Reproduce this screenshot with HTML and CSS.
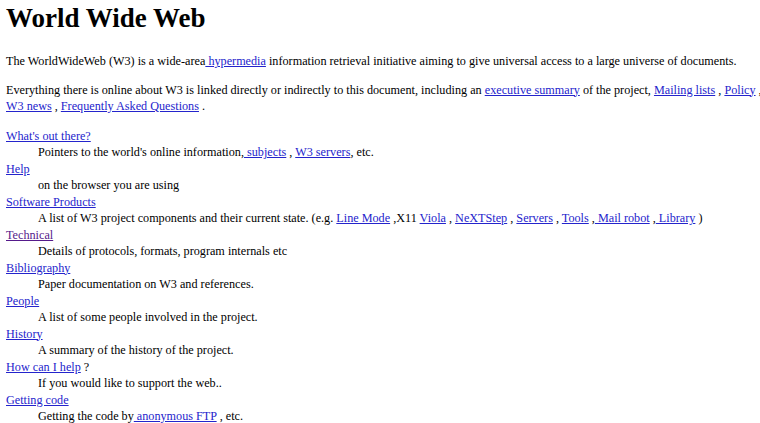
FILE: index.html
```html
<!DOCTYPE html>
<html>
<head>
<meta charset="utf-8">
<title>The World Wide Web project</title>
<link rel="stylesheet" href="styles.css">
</head>
<body>
<div class="page">
<h1 class="title">World Wide Web</h1>
<p class="para">The WorldWideWeb (W3) is a wide-area<a href="#"> hypermedia</a> information retrieval initiative aiming to give universal access to a large universe of documents.</p>
<p class="para">Everything there is online about W3 is linked directly or indirectly to this document, including an <a href="#">executive summary</a> of the project, <a href="#">Mailing lists</a> , <a href="#">Policy</a> , November's <a href="#" class="nowrap">W3 news</a> , <a href="#">Frequently Asked Questions</a> .</p>
<dl class="list">
<dt><a href="#">What's out there?</a></dt>
<dd>Pointers to the world's online information,<a href="#"> subjects</a> , <a href="#">W3 servers</a>, etc.</dd>
<dt><a href="#">Help</a></dt>
<dd>on the browser you are using</dd>
<dt><a href="#">Software Products</a></dt>
<dd>A list of W3 project components and their current state. (e.g. <a href="#">Line Mode</a> ,X11 <a href="#">Viola</a> , <a href="#">NeXTStep</a> , <a href="#">Servers</a> , <a href="#">Tools</a> ,<a href="#"> Mail robot</a> ,<a href="#"> Library</a> )</dd>
<dt><a href="#" class="visited">Technical</a></dt>
<dd>Details of protocols, formats, program internals etc</dd>
<dt><a href="#">Bibliography</a></dt>
<dd>Paper documentation on W3 and references.</dd>
<dt><a href="#">People</a></dt>
<dd>A list of some people involved in the project.</dd>
<dt><a href="#">History</a></dt>
<dd>A summary of the history of the project.</dd>
<dt><a href="#">How can I help</a> ?</dt>
<dd>If you would like to support the web..</dd>
<dt><a href="#">Getting code</a></dt>
<dd>Getting the code by<a href="#"> anonymous FTP</a> , etc.</dd>
</dl>
</div>
</body>
</html>
```
FILE: styles.css
```css
html {
  overflow: hidden;
  background: #ffffff;
}
body {
  margin: 0;
  background: #ffffff;
  color: #000000;
  font-family: "Liberation Serif", "Times New Roman", serif;
  font-size: 12.2px;
  line-height: 16.5px;
}
.page {
  width: 822px;
  padding: 0 6px;
}
.title {
  font-size: 27px;
  line-height: 32px;
  font-weight: bold;
  margin: 2px 0 19px 0;
}
.para {
  margin: 0 0 12px 0;
}
.list {
  margin: 13px 0 0 0;
}
.list dt {
  margin: 0;
}
.list dd {
  margin: 0 0 0 32px;
}
a {
  color: #2424cc;
  text-decoration: underline;
}
a.visited {
  color: #551a8b;
}
.nowrap {
  white-space: nowrap;
}
```
